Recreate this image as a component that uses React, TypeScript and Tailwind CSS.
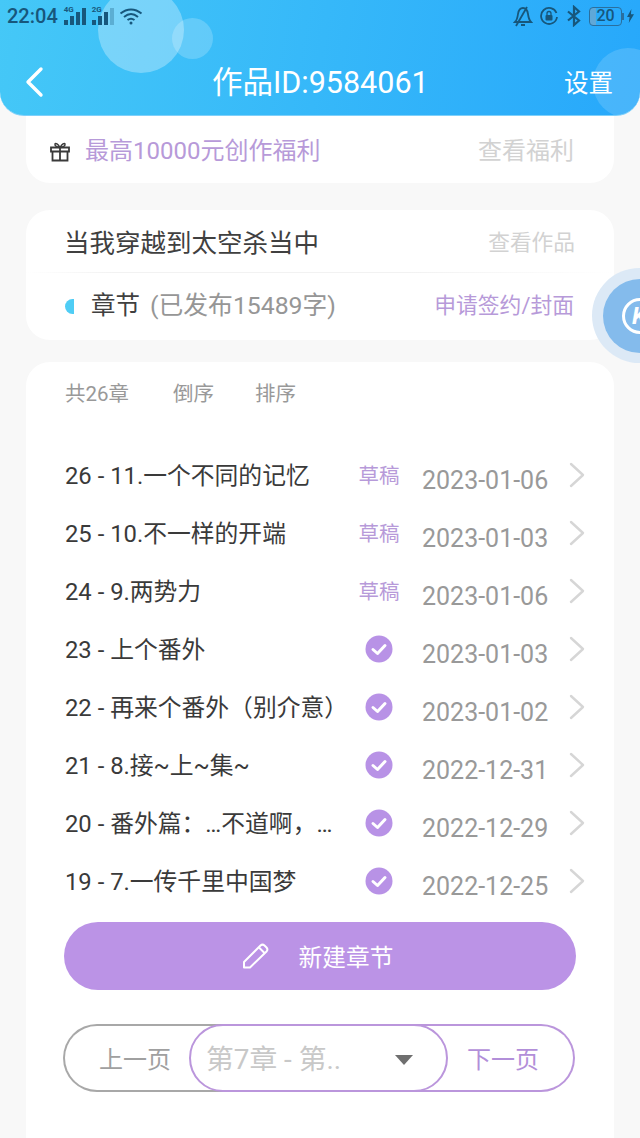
const FONT = "font-['Roboto','Noto_Sans_CJK_SC',sans-serif]";

const CHAPTERS = [
  { title: "26 - 11.一个不同的记忆", date: "2023-01-06", draft: true },
  { title: "25 - 10.不一样的开端", date: "2023-01-03", draft: true },
  { title: "24 - 9.两势力", date: "2023-01-06", draft: true },
  { title: "23 - 上个番外", date: "2023-01-03", draft: false },
  { title: "22 - 再来个番外（别介意）", date: "2023-01-02", draft: false },
  { title: "21 - 8.接~上~集~", date: "2022-12-31", draft: false },
  { title: "20 - 番外篇：…不道啊，…", date: "2022-12-29", draft: false },
  { title: "19 - 7.一传千里中国梦", date: "2022-12-25", draft: false },
];

function Signal({ label, bars, className }: { label: string; bars: number; className: string }) {
  const heights = [5, 9, 13, 17];
  return (
    <div className={`relative flex h-[17px] w-[22px] items-end gap-[2px] ${className}`}>
      <span className="absolute left-0 top-[-2px] text-[8px] font-bold leading-none">{label}</span>
      {heights.map((h, i) => (
        <span
          key={i}
          className={`w-[4px] ${i < bars ? "bg-[#17577c]" : "bg-[#17577c]/30"}`}
          style={{ height: h }}
        />
      ))}
    </div>
  );
}

function StatusBar() {
  return (
    <div className="flex h-[32px] items-center justify-between pl-[7px] pr-[6px] text-[#17577c]">
      <div className="flex items-center">
        <span className="text-[20px] font-medium leading-none">22:04</span>
        <Signal label="4G" className="ml-[6px]" bars={4} />
        <Signal label="2G" className="ml-[6px]" bars={3} />
        <svg width="24" height="18" viewBox="0 0 24 18" className="ml-[5px]" fill="none" stroke="currentColor" strokeWidth="2">
          <path d="M1.5 6.5C8 1 16 1 22.5 6.5" />
          <path d="M5 10C9.500 6.200 14.500 6.200 19 10" />
          <path d="M8.500 13C10.800 11.300 13.200 11.300 15.500 13" />
          <circle cx="12" cy="16" r="1.500" fill="currentColor" stroke="none" />
        </svg>
      </div>
      <div className="flex items-center">
        <svg width="20" height="22" viewBox="0 0 20 22" fill="none" stroke="currentColor" strokeWidth="1.800">
          <path d="M2 17c2-2 2.500-4 3-8 .5-3.500 2.500-6 5-6s4.500 2.500 5 6c.5 4 1 6 3 8z" />
          <path d="M8 20h4" />
          <path d="M14 2 3 21" />
        </svg>
        <svg width="20" height="20" viewBox="0 0 20 20" className="ml-[6px]" fill="none" stroke="currentColor" strokeWidth="1.800">
          <path d="M17.500 7A8 8 0 1 0 18 11" />
          <rect x="6.500" y="9" width="7" height="5.500" rx="1" fill="currentColor" stroke="none" />
          <path d="M8 9V7.500a2 2 0 0 1 4 0V9" strokeWidth="1.300" />
        </svg>
        <svg width="16" height="22" viewBox="0 0 16 22" className="ml-[7px]" fill="none" stroke="currentColor" strokeWidth="2.200">
          <path d="M2 6.500 13 15.500 8 20V2l5 4.500L2 15.500" />
        </svg>
        <div className="ml-[7px] flex h-[19px] w-[33px] items-center justify-center rounded-[4px] border border-[#2a6f9e] bg-[linear-gradient(90deg,#5fa8d8_0,#5fa8d8_20%,transparent_20%)] text-[16px] font-medium leading-none">
          20
        </div>
        <div className="h-[7px] w-[2px] bg-[#2a6f9e]" />
        <svg width="7" height="16" viewBox="0 0 8 16" className="ml-[3px]" fill="currentColor">
          <path d="M5 0 0 9h3l-1 7 6-10H4.500z" />
        </svg>
      </div>
    </div>
  );
}

function Header() {
  return (
    <header className="relative z-10 h-[116px] overflow-hidden rounded-b-[24px] border-b border-b-[#7fd0fa] bg-[linear-gradient(100deg,#45c8f7,#27a8fb)]">
      <div className="absolute left-[98px] top-[-13px] h-[86px] w-[86px] rounded-full bg-white/30" />
      <div className="absolute left-[172px] top-[18px] h-[41px] w-[41px] rounded-full bg-white/20" />
      <div className="absolute left-[593px] top-[48px] h-[70px] w-[70px] rounded-full bg-white/15" />
      <div className="relative">
        <StatusBar />
        <div className="relative mt-[32px] flex h-[50px] items-start justify-between pl-[23px] pr-[27px] text-white">
          <svg width="22" height="32" viewBox="0 0 22 32" className="mt-[2px]" fill="none" stroke="currentColor" strokeWidth="3.400" strokeLinecap="round" strokeLinejoin="round">
            <path d="M18 3 5 16l13 13" />
          </svg>
          <h1 className="absolute left-[212px] top-[-1px] whitespace-nowrap text-[30.500px] leading-[40px]">作品ID:9584061</h1>
          <span className="mt-[3px] text-[24.500px] leading-[34px]">设置</span>
        </div>
      </div>
    </header>
  );
}

function Bonus() {
  return (
    <section className="mx-[26px] flex h-[67px] items-center justify-between rounded-b-[24px] bg-white pl-[24px] pr-[40px] pt-[3px]">
      <div className="flex items-center">
        <svg width="20" height="21" viewBox="0 0 20 21" fill="none" stroke="#3a3a3a" strokeWidth="1.800">
          <path d="M1 6.500h18v4H1zM2.500 10.500V19.500h15V10.500M10 6.500v13" />
          <path d="M10 6.500C8 3 5.500 1.500 5 3c-.5 1.800 2 3.500 5 3.500zM10 6.500c2-3.500 4.500-5 5-3.500.5 1.800-2 3.500-5 3.500z" strokeWidth="1.500" />
        </svg>
        <span className="ml-[15px] text-[24px] leading-[30px] text-[#b79ad9]">最高10000元创作福利</span>
      </div>
      <span className="text-[24px] leading-[30px] text-[#d2d2d2]">查看福利</span>
    </section>
  );
}

function WorkCard() {
  return (
    <section className="relative mx-[26px] mt-[27px] h-[130px] rounded-[24px] bg-white">
      <div className="flex h-[62px] items-center justify-between px-[39px] pt-[3px]">
        <span className="ml-[-1px] text-[25.500px] leading-[30px] text-[#404040]">当我穿越到太空杀当中</span>
        <span className="ml-[-1px] text-[21.700px] leading-[30px] text-[#d2d2d2]">查看作品</span>
      </div>
      <div className="h-[1px] bg-[linear-gradient(90deg,#ffffff,#f2f2f2_15%,#f2f2f2_65%,#ffffff)]" />
      <div className="flex h-[67px] items-center justify-between pb-[1px] pr-[40px]">
        <div className="flex items-center">
          <span className="ml-[39px] h-[15px] w-[9px] rounded-l-full bg-[#4fcdf5]" />
          <span className="ml-[17px] text-[24.500px] leading-[30px] text-[#404040]">章节</span>
          <span className="ml-[10px] text-[24.800px] leading-[30px] text-[#969696]">(已发布15489字)</span>
        </div>
        <span className="text-[21.800px] leading-[30px] text-[#b79ad9]">申请签约/封面</span>
      </div>
    </section>
  );
}

function Row({ title, date, draft }: { title: string; date: string; draft: boolean }) {
  return (
    <li className="flex h-[58px] items-center">
      <span className="w-[285px] whitespace-nowrap text-[23.800px] leading-[30px] text-[#3a3a3a]">{title}</span>
      <span className="flex w-[69px] justify-center pr-[11px]">
        {draft ? (
          <span className="text-[20.500px] leading-[26px] text-[#b79ad9]">草稿</span>
        ) : (
          <svg width="28" height="28" viewBox="0 0 28 28" className="mb-[2px]">
            <circle cx="14" cy="14" r="13.500" fill="#b892e6" />
            <path d="m8 14.500 4.500 4L20 10.500" fill="none" stroke="#fff" strokeWidth="3" strokeLinecap="round" strokeLinejoin="round" />
          </svg>
        )}
      </span>
      <span className="mt-[10px] w-[145px] pl-[3px] text-[25px] leading-[30px] text-[#999999]">{date}</span>
      <svg width="16" height="26" viewBox="0 0 16 26" className="mb-[2px] ml-[5px]" fill="none" stroke="#d6d6d6" strokeWidth="2.400" strokeLinecap="round" strokeLinejoin="round">
        <path d="m2 2 12 11L2 24" />
      </svg>
    </li>
  );
}

function ChapterCard() {
  return (
    <section className="mx-[26px] mt-[22px] rounded-t-[24px] bg-white px-[39px]">
      <div className="flex h-[62px] items-center gap-[44px] pt-[2px] text-[20.500px] text-[#999999]">
        <span>共26章</span>
        <span>倒序</span>
        <span className="ml-[-3px]">排序</span>
      </div>
      <ul className="mt-[23px] w-[540px]">
        {CHAPTERS.map((c) => (
          <Row key={c.title} {...c} />
        ))}
      </ul>
      <button className="ml-[-1px] mt-[11px] flex h-[68px] w-[512px] items-center justify-center rounded-full bg-[#bb93e6] pr-[6px] text-white">
        <svg width="30" height="30" viewBox="0 0 30 30" fill="none" stroke="currentColor" strokeWidth="2" strokeLinejoin="round">
          <path d="M3 26.500V21L19.500 4.500a3 3 0 0 1 4 0l2 2a3 3 0 0 1 0 4L9 26.500z" />
          <path d="m18 6.500 6 6" />
        </svg>
        <span className="ml-[28px] pt-[3px] text-[23.700px] leading-[30px]">新建章节</span>
      </button>
      <div className="relative ml-[-2px] mt-[34px] h-[68px] w-[512px]">
        <div className="absolute left-0 top-0 flex h-[68px] w-[200px] items-center rounded-l-full border-2 border-r-0 border-[#a8a8a8] pl-[34px] pt-[3px] text-[24px] text-[#a0a0a0]">
          上一页
        </div>
        <div className="absolute right-0 top-0 flex h-[68px] w-[200px] items-center justify-end rounded-r-full border-2 border-l-0 border-[#bb96dc] pr-[34px] pt-[3px] text-[24px] text-[#b28fd9]">
          下一页
        </div>
        <div className="absolute left-[126px] top-0 flex h-[68px] w-[259px] items-center rounded-full border-2 border-[#bb96dc] bg-white pl-[15px] pt-[4px] text-[27.800px] text-[#c8c8c8]">
          第7章 - 第..
          <span className="absolute right-[33px] top-[29px] h-0 w-0 border-x-[9px] border-t-[10px] border-x-transparent border-t-[#6f6f6f]" />
        </div>
      </div>
      <div className="h-[47px]" />
    </section>
  );
}

export default function App() {
  return (
    <div className={`relative h-[1138px] w-[640px] overflow-hidden bg-[#f8f8f8] ${FONT}`}>
      <Header />
      <Bonus />
      <WorkCard />
      <ChapterCard />
      {/* floating button on the right edge */}
      <div className="absolute left-[592px] top-[268px] flex h-[95px] w-[95px] items-center justify-center rounded-full bg-[#dce9f6]">
        <div className="flex h-[74px] w-[74px] items-center justify-center rounded-full bg-[#84bbec]">
          <div className="flex h-[36px] w-[36px] items-center justify-center rounded-full border-[3px] border-white text-[24px] font-bold italic leading-none text-white">
            K
          </div>
        </div>
      </div>
    </div>
  );
}
